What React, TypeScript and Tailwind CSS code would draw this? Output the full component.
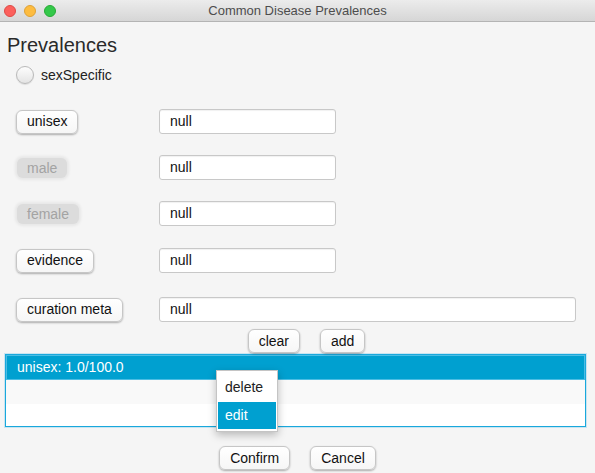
import { useState } from "react";

type Row = { label: string; disabled?: boolean; wide?: boolean; mt: string };

const rows: Row[] = [
  { label: "unisex", mt: "mt-[24px]" },
  { label: "male", disabled: true, mt: "mt-[21px]" },
  { label: "female", disabled: true, mt: "mt-[21px]" },
  { label: "evidence", mt: "mt-[22px]" },
  { label: "curation meta", wide: true, mt: "mt-[24px]" },
];

const Button = ({ label, disabled }: { label: string; disabled?: boolean }) =>
  disabled ? (
    <div className="inline-flex h-[20px] px-[10px] items-center rounded-[6px] bg-[#dcdcdc] text-[#a3a3a3] text-[14px] shadow-[0_0_3px_2px_rgba(0,0,0,0.06)]">
      {label}
    </div>
  ) : (
    <div className="inline-flex h-[24px] px-[10px] items-center rounded-[6px] border border-[#c6c6c6] bg-gradient-to-b from-white to-[#f6f6f6] text-[#111] text-[14px] shadow-[0_1px_2px_rgba(0,0,0,0.3)]">
      {label}
    </div>
  );

export default function App() {
  const [selected] = useState(0);

  return (
    <div
      className="w-[595px] h-[473px] bg-[#f5f5f5] overflow-hidden relative"
      style={{ fontFamily: '"Liberation Sans", Arial, sans-serif' }}
    >
      {/* Title bar */}
      <div className="h-[22px] relative flex items-center justify-center bg-gradient-to-b from-[#ececec] to-[#d6d6d6] border-b border-[#b4b4b4]">
        <div className="absolute left-[4px] top-[5px] flex gap-[8px]">
          <span className="w-[12px] h-[12px] rounded-full bg-[#fc605c] border border-[#de4a46]" />
          <span className="w-[12px] h-[12px] rounded-full bg-[#fdbc40] border border-[#dea236]" />
          <span className="w-[12px] h-[12px] rounded-full bg-[#34c84a] border border-[#27aa35]" />
        </div>
        <span className="text-[13px] text-[#4d4d4d]">Common Disease Prevalences</span>
      </div>

      <div className="pl-[7px] mt-[9px] text-[20px] leading-[28px] text-[#2a2a2a]">Prevalences</div>

      <div className="flex items-center pl-[16px] mt-[6px] h-[20px]">
        <span className="w-[18px] h-[18px] rounded-full border border-[#b9b9b9] bg-gradient-to-b from-[#fdfdfd] to-[#e4e4e4] shadow-[0_1px_1px_rgba(0,0,0,0.1)]" />
        <span className="ml-[7px] text-[14px] text-[#222]">sexSpecific</span>
      </div>

      {rows.map((r) => (
        <div key={r.label} className={`flex items-center h-[25px] ${r.mt}`}>
          <div className={`w-[159px] ${r.disabled ? "pl-[17px]" : "pl-[16px]"}`}>
            <Button label={r.label} disabled={r.disabled} />
          </div>
          <div
            className={`h-[25px] ${r.wide ? "w-[417px]" : "w-[177px]"} bg-white border border-[#c8c8c8] rounded-[3px] flex items-center pl-[10px] text-[14px] text-[#111] shadow-[inset_0_1px_1px_rgba(0,0,0,0.06)]`}
          >
            null
          </div>
        </div>
      ))}

      <div className="flex justify-center gap-[20px] pl-[18px] mt-[7px]">
        <Button label="clear" />
        <Button label="add" />
      </div>

      {/* List */}
      <div className="ml-[5px] mt-[1px] w-[581px] h-[73px] border border-[#19a8dc] bg-white shadow-[0_0_0_1px_rgba(120,200,235,0.35)]">
        {["unisex: 1.0/100.0", "", ""].map((t, i) => (
          <div
            key={i}
            className={
              i === selected
                ? "h-[25px] bg-[#00a0d0] border border-[#4cbde3] text-white text-[14px] flex items-center pl-[10px]"
                : i === 1
                ? "h-[24px] bg-[#f9f9f9]"
                : "h-[22px] bg-white"
            }
          >
            {t}
          </div>
        ))}
      </div>

      <div className="flex justify-center gap-[20px] mt-[19px]">
        <Button label="Confirm" />
        <Button label="Cancel" />
      </div>

      {/* Context menu */}
      <div className="absolute left-[216px] top-[370px] w-[62px] h-[62px] bg-white border border-[#c4c4c4] shadow-[0_3px_8px_rgba(0,0,0,0.25)] p-[1px] flex flex-col">
        <div className="h-[30px] flex items-center pl-[7px] text-[14px] text-[#222]">delete</div>
        <div className="h-[27px] flex items-center pl-[7px] text-[14px] text-white bg-[#00a0d0]">edit</div>
      </div>
    </div>
  );
}
